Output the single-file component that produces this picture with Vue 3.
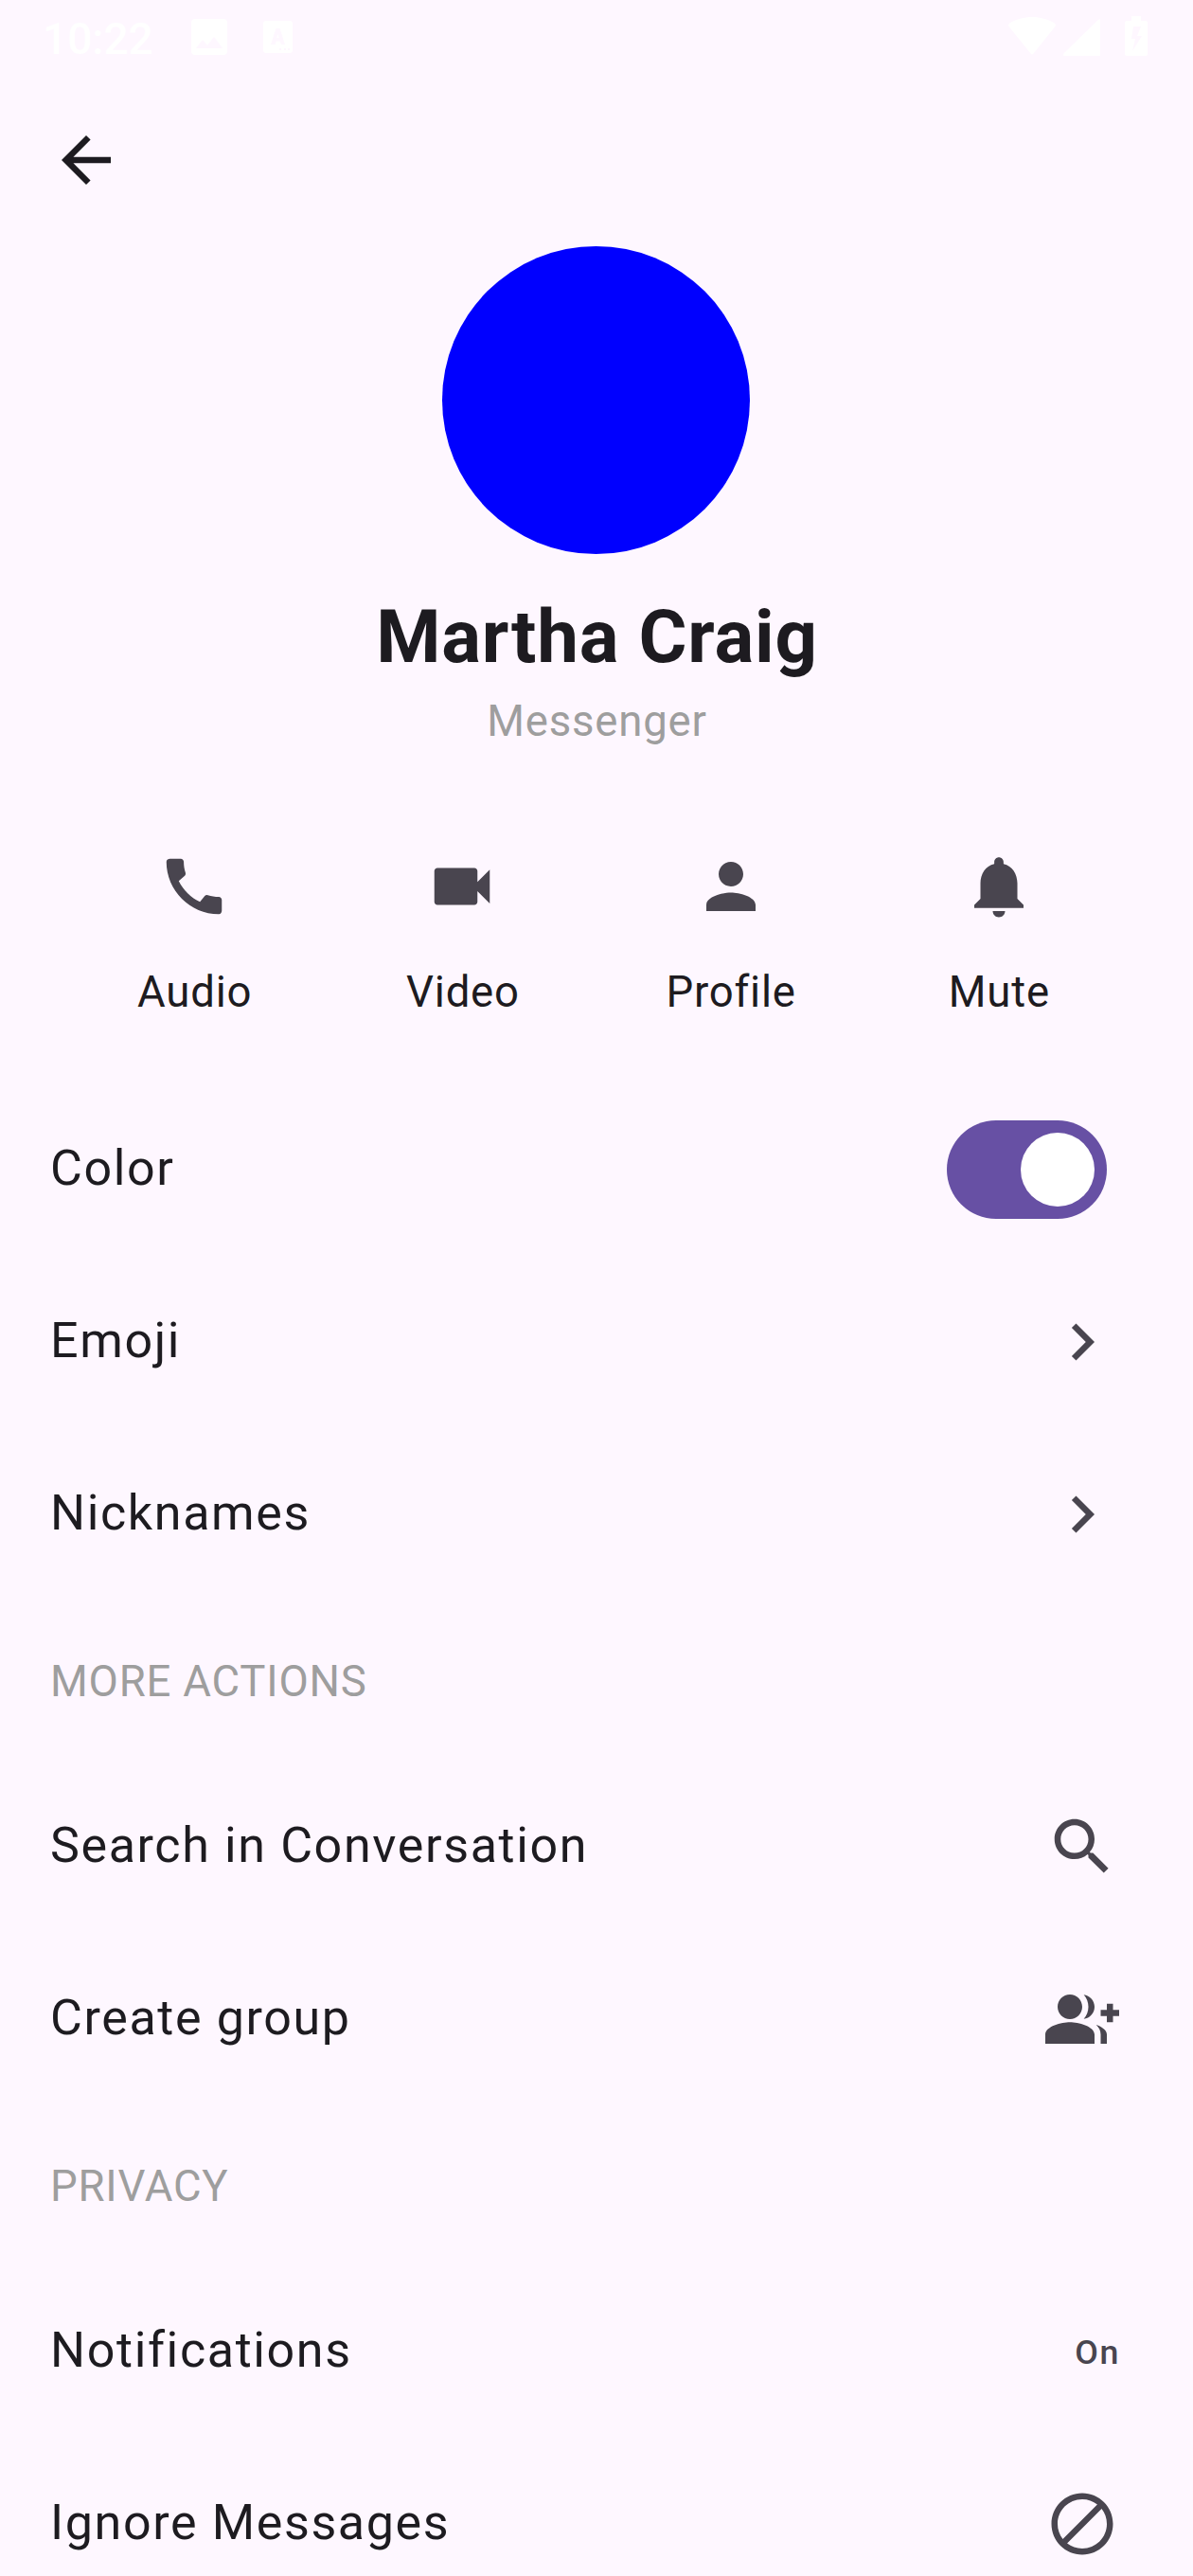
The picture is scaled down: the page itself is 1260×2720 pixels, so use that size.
<script setup>
import { ref } from 'vue'

const actions = [
  { label: 'Audio', icon: 'M20.01 15.38c-1.23 0-2.42-.2-3.53-.56a.977.977 0 0 0-1.01.24l-1.57 1.97c-2.83-1.35-5.48-3.9-6.89-6.83l1.95-1.66c.27-.28.35-.67.24-1.02-.37-1.11-.56-2.3-.56-3.53 0-.54-.45-.99-.99-.99H4.19C3.65 3 3 3.24 3 3.99 3 13.28 10.73 21 20.01 21c.71 0 .99-.63.99-1.18v-3.45c0-.54-.45-.99-.99-.99z' },
  { label: 'Video', icon: 'M17 10.5V7c0-.55-.45-1-1-1H4c-.55 0-1 .45-1 1v10c0 .55.45 1 1 1h12c.55 0 1-.45 1-1v-3.5l4 4v-11l-4 4z' },
  { label: 'Profile', icon: 'M12 12c2.21 0 4-1.79 4-4s-1.79-4-4-4-4 1.79-4 4 1.79 4 4 4zm0 2c-2.67 0-8 1.34-8 4v2h16v-2c0-2.66-5.33-4-8-4z' },
  { label: 'Mute', icon: 'M12 22c1.1 0 2-.9 2-2h-4c0 1.1.89 2 2 2zm6-6v-5c0-3.07-1.64-5.64-4.5-6.32V4c0-.83-.67-1.5-1.5-1.5s-1.5.67-1.5 1.5v.68C7.63 5.36 6 7.92 6 11v5l-2 2v1h16v-1l-2-2z' },
]

const chevron = 'M8.59 16.59 13.17 12 8.59 7.41 10 6l6 6-6 6-1.41-1.41z'

const groups = [
  {
    rows: [
      { label: 'Color', toggle: true },
      { label: 'Emoji', icon: chevron },
      { label: 'Nicknames', icon: chevron },
    ],
  },
  {
    title: 'MORE ACTIONS',
    rows: [
      { label: 'Search in Conversation', icon: 'M15.5 14h-.79l-.28-.27C15.41 12.59 16 11.11 16 9.5 16 5.91 13.09 3 9.5 3S3 5.91 3 9.5 5.91 16 9.5 16c1.61 0 3.09-.59 4.23-1.57l.27.28v.79l5 4.99L20.49 19l-4.99-5zm-6 0C7.01 14 5 11.99 5 9.5S7.01 5 9.5 5 14 7.01 14 9.5 11.99 14 9.5 14z' },
      { label: 'Create group', icon: 'M22 9V7h-2v2h-2v2h2v2h2v-2h2V9zM8 12c2.21 0 4-1.79 4-4s-1.79-4-4-4-4 1.79-4 4 1.79 4 4 4zM8 13c-2.67 0-8 1.34-8 4v3h16v-3c0-2.66-5.33-4-8-4zM12.51 4.05C13.43 5.11 14 6.49 14 8s-.57 2.89-1.49 3.95C14.47 11.7 16 10.04 16 8s-1.53-3.7-3.49-3.95zM16.53 13.83C17.42 14.66 18 15.7 18 17v3h2v-3c0-1.45-1.59-2.51-3.47-3.17z' },
    ],
  },
  {
    title: 'PRIVACY',
    rows: [
      { label: 'Notifications', value: 'On' },
      { label: 'Ignore Messages', icon: 'M12 2C6.48 2 2 6.48 2 12s4.48 10 10 10 10-4.48 10-10S17.52 2 12 2zM4 12c0-4.42 3.58-8 8-8 1.85 0 3.55.63 4.9 1.69L5.69 16.9C4.63 15.55 4 13.85 4 12zm8 8c-1.85 0-3.55-.63-4.9-1.69L18.31 7.1C19.37 8.45 20 10.15 20 12c0 4.42-3.58 8-8 8z' },
    ],
  },
]

const colorOn = ref(true)
</script>

<template>
  <div class="screen">
    <header class="status">
      <span class="clock">10:22</span>
      <svg class="picture" width="38" height="38" viewBox="0 0 38 38">
        <path fill-rule="evenodd" d="M4 0h30a4 4 0 0 1 4 4v30a4 4 0 0 1-4 4H4a4 4 0 0 1-4-4V4a4 4 0 0 1 4-4zM5 31h28L24 19l-7 9-5-6z" />
      </svg>
      <svg class="caption" width="31" height="34" viewBox="0 0 31 34">
        <path fill-rule="evenodd" d="M3 0h25a3 3 0 0 1 3 3v28a3 3 0 0 1-3 3H3a3 3 0 0 1-3-3V3a3 3 0 0 1 3-3zM13.500 8 8 25h4.500l1.300-3.500h3.900l1.300 3.500h4L17.500 8zm2 6 1.200 4h-2.400zM17 29v2h2v-2zm5 0v2h2v-2zm4 0v2h2v-2z" />
      </svg>
      <span class="spacer"></span>
      <svg class="wifi" width="50" height="40" viewBox="0 0 50 40">
        <path d="M1 10.500C-.3 9-.2 7.600 1.300 6.600 15-2.200 35-2.200 48.700 6.600c1.500 1 1.600 2.400.3 3.900L26.500 38.500c-1 1.200-2 1.200-3 0z" />
      </svg>
      <svg class="signal" width="39" height="39" viewBox="0 0 39 39">
        <path d="M37 .7C38 0 39 0 39 1v38H2c-2 0-2.500-1.500-1.300-2.700z" />
      </svg>
      <svg class="battery" width="24" height="43" viewBox="0 0 24 43">
        <path fill-rule="evenodd" d="M7 0h10v5h5a2 2 0 0 1 2 2v33a2 2 0 0 1-2 2H2a2 2 0 0 1-2-2V7a2 2 0 0 1 2-2h5zM9 11 7 24h4L8 37l10-16h-5l4-10z" />
      </svg>
    </header>

    <nav class="toolbar">
      <svg class="icon dark" viewBox="0 0 24 24"><path d="M20 11H7.830l5.590-5.590L12 4l-8 8 8 8 1.410-1.410L7.830 13H20v-2z" /></svg>
    </nav>

    <section class="profile">
      <div class="avatar"></div>
      <h1 class="name">Martha Craig</h1>
      <p class="subtitle">Messenger</p>
    </section>

    <section class="actions">
      <div v-for="a in actions" :key="a.label" class="action">
        <svg class="icon" viewBox="0 0 24 24"><path :d="a.icon" /></svg>
        <span class="action-label">{{ a.label }}</span>
      </div>
    </section>

    <section v-for="(g, i) in groups" :key="i">
      <h2 v-if="g.title" class="heading">{{ g.title }}</h2>
      <div v-for="r in g.rows" :key="r.label" class="row">
        <span class="row-label">{{ r.label }}</span>
        <button v-if="r.toggle" class="switch" :class="{ on: colorOn }" @click="colorOn = !colorOn">
          <span class="thumb"></span>
        </button>
        <span v-else-if="r.value" class="value">{{ r.value }}</span>
        <svg v-else class="icon" viewBox="0 0 24 24"><path :d="r.icon" /></svg>
      </div>
    </section>
  </div>
</template>

<style>
body {
  background: #fef7ff;
  overflow: hidden;
}
</style>

<style scoped>
.screen {
  width: 1260px;
  height: 2720px;
  overflow: hidden;
  background: #fef7ff;
  color: #1d1b20;
  font-family: Roboto, "Liberation Sans", sans-serif;
}
.status {
  display: flex;
  align-items: flex-start;
  box-sizing: border-box;
  height: 130px;
  padding: 0 48px 0 45px;
  fill: #fff;
  color: #fff;
}
.clock {
  width: 157px;
  margin-top: 14px;
  font-size: 46px;
  line-height: 54px;
  font-weight: 500;
}
.picture { margin-top: 20px; }
.caption { margin: 22px 0 0 38px; }
.spacer { flex: 1; }
.wifi { margin-top: 18px; }
.signal { margin: 20px 0 0 8px; }
.battery { margin: 17px 0 0 26px; }
.toolbar {
  height: 130px;
  padding-left: 52px;
}
.icon {
  display: block;
  width: 78px;
  height: 78px;
  fill: #49454f;
}
.icon.dark { fill: #1d1b20; }
.profile {
  display: flex;
  flex-direction: column;
  align-items: center;
  height: 637px;
}
.avatar {
  width: 325px;
  height: 325px;
  margin-right: 0.5px;
  border-radius: 50%;
  background: #0000ff;
}
.name {
  margin: 36px 0 0;
  padding-left: 1px;
  font-size: 78px;
  line-height: 104px;
  font-weight: 700;
  letter-spacing: 0.8125px;
}
.subtitle {
  margin: 4px 0 0;
  padding-left: 1px;
  font-size: 45.5px;
  line-height: 65px;
  letter-spacing: 0.8125px;
  color: #9e9e9e;
}
.actions {
  display: flex;
  height: 247px;
  padding: 0 63.6px;
}
.action {
  flex: 1;
  display: flex;
  flex-direction: column;
  align-items: center;
}
.action-label {
  margin-top: 40px;
  padding-left: 1px;
  font-size: 45.5px;
  line-height: 65px;
  letter-spacing: 0.8125px;
}
.row {
  display: flex;
  align-items: center;
  justify-content: space-between;
  height: 182px;
  padding: 0 78px 0 52px;
}
.row-label {
  padding: 0 0 3px 1px;
  font-size: 52px;
  line-height: 78px;
  letter-spacing: 1.625px;
}
.heading {
  margin: 0;
  padding: 3px 0 0 53px;
  font-size: 45.5px;
  line-height: 166px;
  font-weight: 400;
  letter-spacing: 0.8125px;
  color: #9e9e9e;
}
.switch {
  display: flex;
  align-items: center;
  width: 169px;
  height: 104px;
  margin-right: 13px;
  padding: 0 13px;
  border: 0;
  border-radius: 52px;
  background: #cac4d0;
}
.switch.on {
  justify-content: flex-end;
  background: #6750a4;
}
.thumb {
  width: 78px;
  height: 78px;
  border-radius: 50%;
  background: #fff;
}
.value {
  margin-right: -1px;
  padding-top: 2px;
  font-size: 35.75px;
  line-height: 52px;
  font-weight: 500;
  letter-spacing: 1.625px;
  color: #49454f;
}
</style>
